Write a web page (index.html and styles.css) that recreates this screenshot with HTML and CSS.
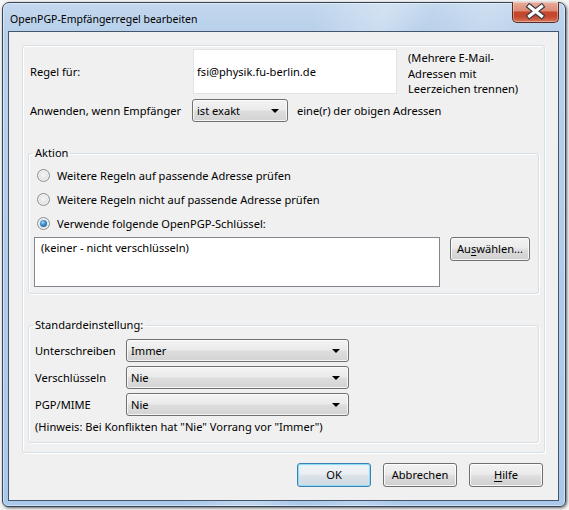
FILE: index.html
```html
<!DOCTYPE html>
<html lang="de">
<head>
<meta charset="utf-8">
<title>OpenPGP-Empfängerregel bearbeiten</title>
<link rel="stylesheet" href="styles.css">
</head>
<body>
<div class="window">
  <div class="titlebar">
    <span class="title">OpenPGP-Empfängerregel bearbeiten</span>
    <div class="close">
      <svg width="47" height="21" viewBox="0 0 47 21">
        <path d="M17.5 5.5 L29.5 15 M29.5 5.5 L17.5 15" stroke="#3a3a44" stroke-width="5.5" stroke-linecap="square" fill="none"/>
        <path d="M17.5 5.5 L29.5 15 M29.5 5.5 L17.5 15" stroke="#ffffff" stroke-width="3.2" stroke-linecap="square" fill="none"/>
      </svg>
    </div>
  </div>
  <div class="client">
    <div class="panel">
      <div class="row1">
        <span class="lbl lbl-first">Regel für:</span>
        <div class="textbox">fsi@physik.fu-berlin.de</div>
        <div class="note">(Mehrere E-Mail-<br>Adressen mit<br>Leerzeichen trennen)</div>
      </div>
      <div class="row2">
        <span class="lbl lbl-second">Anwenden, wenn Empfänger</span>
        <div class="combo combo-small">ist exakt</div>
        <span class="after">eine(r) der obigen Adressen</span>
      </div>
      <fieldset class="group group-action">
        <legend>Aktion</legend>
        <div class="radio-row"><span class="radio"></span><span>Weitere Regeln auf passende Adresse prüfen</span></div>
        <div class="radio-row"><span class="radio"></span><span>Weitere Regeln nicht auf passende Adresse prüfen</span></div>
        <div class="radio-row"><span class="radio checked"></span><span>Verwende folgende OpenPGP-Schlüssel:</span></div>
        <div class="keys-row">
          <div class="listbox">(keiner - nicht verschlüsseln)</div>
          <div class="btn btn-choose">Au<u>s</u>wählen...</div>
        </div>
      </fieldset>
      <fieldset class="group group-default">
        <legend>Standardeinstellung:</legend>
        <div class="opt-row"><span class="opt-lbl">Unterschreiben</span><div class="combo combo-wide">Immer</div></div>
        <div class="opt-row"><span class="opt-lbl">Verschlüsseln</span><div class="combo combo-wide">Nie</div></div>
        <div class="opt-row"><span class="opt-lbl">PGP/MIME</span><div class="combo combo-wide">Nie</div></div>
        <div class="hint">(Hinweis: Bei Konflikten hat "Nie" Vorrang vor "Immer")</div>
      </fieldset>
    </div>
    <div class="buttons">
      <div class="btn btn-dlg btn-default">OK</div>
      <div class="btn btn-dlg">Abbrechen</div>
      <div class="btn btn-dlg"><u>H</u>ilfe</div>
    </div>
  </div>
</div>
</body>
</html>
```

FILE: styles.css
```css
* { box-sizing: border-box; }

html, body {
  margin: 0;
  width: 569px;
  height: 510px;
  overflow: hidden;
}

body {
  background: #f4f4f4;
  font-family: "Noto Sans", "Open Sans", sans-serif;
  font-size: 11.1px;
  color: #000;
  white-space: nowrap;
}

.window {
  position: relative;
  margin: 2px 0 0 2px;
  width: 564px;
  height: 505px;
  border: 1px solid #35465a;
  border-radius: 7px 7px 6px 6px;
  padding: 0 6px 5px 5px;
  display: flex;
  flex-direction: column;
  background:
    linear-gradient(105deg, rgba(255,255,255,0) 45%, rgba(255,255,255,.28) 55%, rgba(255,255,255,0) 62%, rgba(255,255,255,.18) 70%, rgba(255,255,255,0) 78%),
    linear-gradient(to bottom, #c4d8ee 0, #b8d0ea 28px, #aac8ea 100%);
  box-shadow: 1px 1px 3px rgba(0,0,0,.6), inset 0 0 0 1px rgba(255,255,255,.45);
}

.titlebar {
  position: relative;
  height: 28px;
  padding: 8px 0 0 2px;
  line-height: 16px;
  flex: none;
}

.title { color: #000; font-size: 10.5px; }

.close {
  position: absolute;
  top: -1px;
  right: 0;
  width: 47px;
  height: 21px;
  border: 1px solid #5b2a22;
  border-top: none;
  border-radius: 0 0 5px 5px;
  background: linear-gradient(to bottom, #e9ad9c 0%, #db8a74 45%, #c64428 50%, #c44a2f 75%, #d8775c 100%);
  box-shadow: inset 0 0 0 1px rgba(255,255,255,.35);
  overflow: hidden;
}
.close svg { display: block; margin: -1px 0 0 -1px; }

.client {
  height: 470px;
  border: 1px solid #44546a;
  background: #f0f0f0;
  padding: 13px 0 0 13px;
  flex: none;
}

.panel {
  width: 523px;
  height: 408px;
  border: 1px solid #d5dfe5;
  border-radius: 3px;
  box-shadow: inset 1px 1px 0 #fff, 1px 1px 0 #fff;
  padding: 3px 0 0 7px;
}

.row1 {
  display: flex;
  align-items: center;
  height: 45px;
}
.lbl-first { width: 163px; flex: none; }
.textbox {
  width: 204px;
  height: 45px;
  flex: none;
  background: #fff;
  border: 1px solid #dfe3e8;
  padding: 0 3px;
  display: flex;
  align-items: center;
}
.note {
  align-self: flex-start;
  margin-left: 11px;
  line-height: 15.5px;
  padding-top: 1px;
}

.row2 {
  display: flex;
  align-items: center;
  margin-top: 5px;
  height: 23px;
}
.lbl-second { width: 162px; flex: none; }
.after { margin-left: 9px; }

.combo {
  position: relative;
  height: 23px;
  flex: none;
  border: 1px solid #707070;
  border-radius: 3px;
  padding: 0 4px;
  line-height: 21px;
  background: linear-gradient(to bottom, #f3f3f3 0%, #ebebeb 45%, #dddddd 55%, #d3d3d3 100%);
  box-shadow: inset 0 0 0 1px rgba(255,255,255,.75);
}
.combo::after {
  content: "";
  position: absolute;
  right: 8px;
  top: 9px;
  border-left: 4px solid transparent;
  border-right: 4px solid transparent;
  border-top: 4px solid #000;
}
.combo-small { width: 96px; }
.combo-wide { width: 223px; }

.group {
  margin: 0;
  border: 1px solid #d5dfe5;
  border-radius: 3px;
  box-shadow: inset 1px 1px 0 #fff, 1px 1px 0 #fff;
  padding: 2px 0 6px 0;
  width: 511px;
  min-width: 0;
}
.group legend {
  margin-left: 4px;
  padding: 0 2px;
  line-height: 16px;
}

.group-action { margin: 23px 0 0 -2px; }

.radio-row {
  display: flex;
  align-items: center;
  height: 24px;
  padding-left: 8px;
  gap: 7px;
}
.radio {
  position: relative;
  width: 13px;
  height: 13px;
  border-radius: 50%;
  border: 1px solid #8c8e90;
  background: radial-gradient(circle at 50% 45%, #f6f6f6 0%, #e6e6e6 45%, #c9c9c9 100%);
  box-shadow: inset 0 0 0 1px #f4f4f4;
  flex: none;
}
.radio.checked::after {
  content: "";
  position: absolute;
  left: 2px;
  top: 2px;
  width: 7px;
  height: 7px;
  border-radius: 50%;
  background: radial-gradient(circle at 40% 35%, #a6dcf8 0%, #3c8fd2 40%, #1a4e8c 100%);
}

.keys-row {
  display: flex;
  align-items: flex-start;
  margin: 2px 0 0 5px;
}
.listbox {
  width: 406px;
  height: 50px;
  flex: none;
  background: #fff;
  border: 1px solid #828790;
  padding: 2px 6px;
  line-height: 16px;
}

.btn {
  height: 24px;
  flex: none;
  border: 1px solid #707070;
  border-radius: 3px;
  text-align: center;
  line-height: 22px;
  background: linear-gradient(to bottom, #f2f2f2 0%, #ebebeb 45%, #dddddd 55%, #cfcfcf 100%);
  box-shadow: inset 0 0 0 1px rgba(255,255,255,.8);
}
.btn u { text-decoration-thickness: 1px; text-underline-offset: 2px; }
.btn-choose { width: 80px; margin-left: 10px; }

.group-default { margin: 23px 0 0 -2px; padding: 6px 0 7px 0; }
.opt-row {
  display: flex;
  align-items: center;
  height: 23px;
  margin: 0 0 4px 6px;
}
.opt-lbl { width: 91px; flex: none; }
.hint { margin: -1px 0 0 6px; line-height: 16px; }

.buttons {
  display: flex;
  justify-content: flex-end;
  gap: 12px;
  margin-top: 10px;
  padding-right: 15px;
}
.btn-dlg { width: 74px; }
.btn-default {
  border-color: #3c7fb1;
  box-shadow: inset 0 0 0 1px #8fdcf8, inset 0 0 2px 1px #c8eefc;
  background: linear-gradient(to bottom, #f1f5f8 0%, #e9eef2 45%, #dae2e8 55%, #d0d9e0 100%);
}
```
